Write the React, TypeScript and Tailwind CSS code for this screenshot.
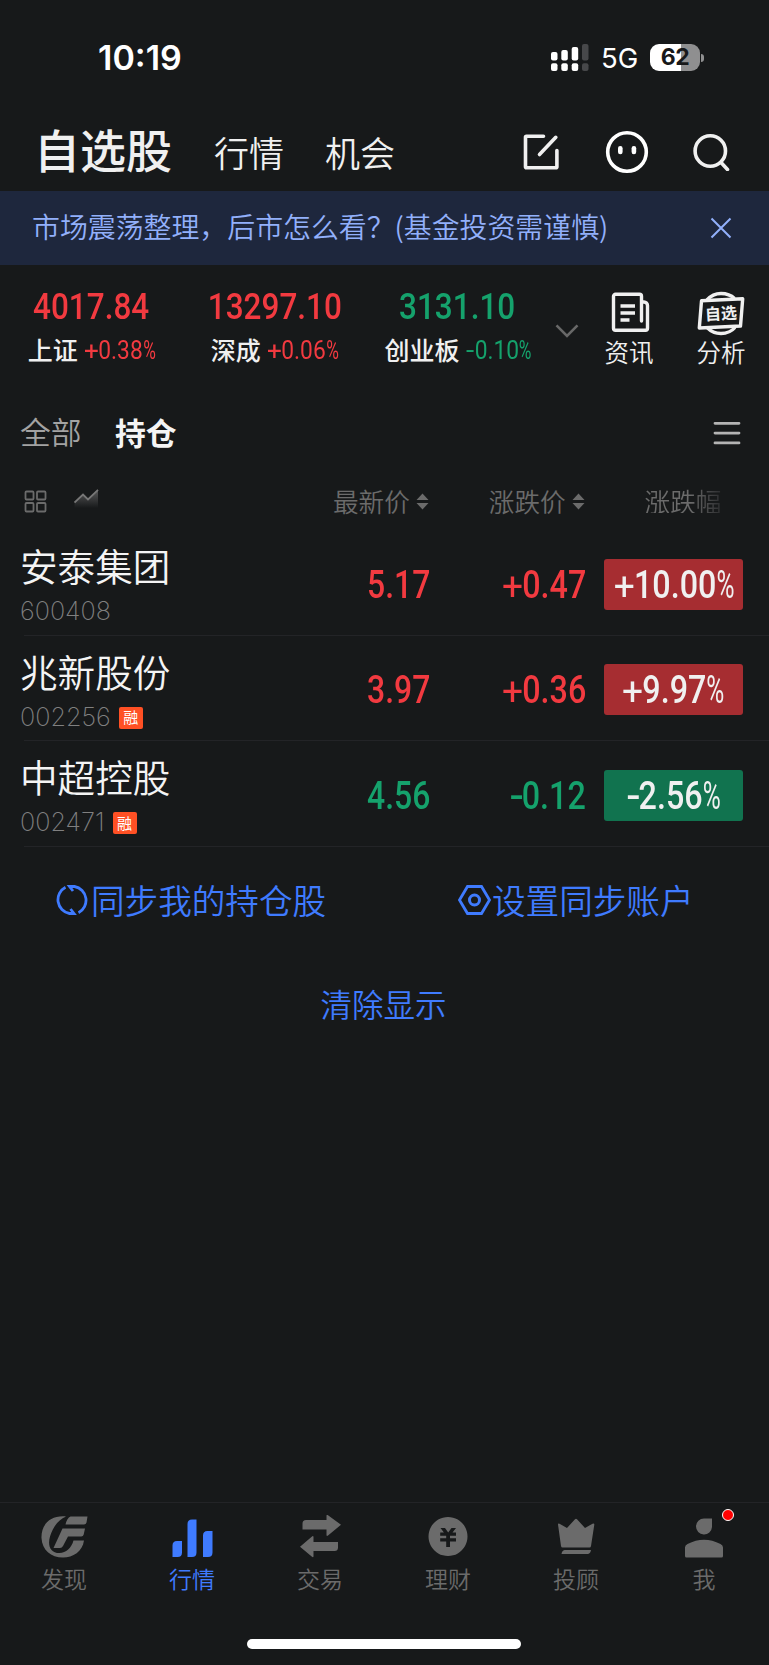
import React from "react";

type Tone = "up" | "down";

const toneText: Record<Tone, string> = {
  up: "text-[#f23a40]",
  down: "text-[#15a26c]",
};

const tonePill: Record<Tone, string> = {
  up: "bg-[#a62d31]",
  down: "bg-[#11734f]",
};

/** Condensed figures; the origin class decides which edge stays put. */
function Figure({ value, className }: { value: string; className: string }) {
  const percent = value.endsWith("%");
  const sign = /^[+-]/.test(value) ? value[0] : "";
  const digits = value.replace(/[+\-%]/g, "");
  return (
    <span className={`inline-block whitespace-nowrap font-['Roboto'] leading-none ${className}`}>
      {sign === "+" && <span className="inline-block w-[0.63em] origin-left translate-y-[0.05em] scale-x-[1.15] font-normal">+</span>}
      {sign === "-" && <span className="inline-block w-[0.38em] origin-left scale-x-[1.3]">-</span>}
      {digits}
      {percent && <span className="inline-block w-[0.55em] origin-left scale-x-[0.76] font-normal">%</span>}
    </span>
  );
}

function StatusBar() {
  return (
    <div className="flex h-[115px] items-center pl-[98px] text-white">
      <span className="w-[453px] pt-px font-['Inter'] text-[34px] font-semibold leading-none">10:19</span>
      <svg width="38" height="28" viewBox="0 0 38 28" fill="currentColor">
        <rect x="0" y="8" width="6.5" height="8.5" rx="2" />
        <rect x="10.3" y="6" width="6.5" height="10.5" rx="2" />
        <rect x="20.7" y="3" width="6.5" height="13.5" rx="2" />
        <rect x="31" y="0" width="6.5" height="16.5" rx="2" fill="#47484a" />
        <rect x="0" y="19.3" width="6.5" height="7.7" rx="2" />
        <rect x="10.3" y="19.3" width="6.5" height="7.7" rx="2" />
        <rect x="20.7" y="19.3" width="6.5" height="7.7" rx="2" />
        <rect x="31" y="19.3" width="6.5" height="7.7" rx="2" fill="#47484a" />
      </svg>
      <span className="ml-[12px] w-[49px] pt-[3px] font-['Inter'] text-[27.5px] leading-none">5G</span>
      <div className="flex h-[27px] w-[50px] items-center justify-center rounded-[9px] bg-[linear-gradient(90deg,#fff_63%,#8f8f90_63%)]">
        <span className="font-['Inter'] text-[23px] font-bold leading-none tracking-[-0.5px] text-[#17181a]">62</span>
      </div>
      <span className="ml-px h-[8px] w-[3px] rounded-r-full bg-[#8f8f90]" />
    </div>
  );
}

function Header() {
  return (
    <div className="flex h-[74px] items-center pl-[34px] text-[#f0f0f0]">
      <span className="mt-[-9px] w-[180px] text-[46px] font-medium leading-none">自选股</span>
      <span className="mt-[-1px] w-[111px] text-[35px] font-[350] leading-none">行情</span>
      <span className="mt-[-1px] w-[198px] text-[35px] font-[350] leading-none">机会</span>
      <svg width="38" height="38" viewBox="0 0 38 38" fill="none" stroke="currentColor" strokeWidth="3.6" strokeLinecap="round" strokeLinejoin="round">
        <path d="M20.5 3.3H3.5a1 1 0 0 0-1 1v29.4a1 1 0 0 0 1 1h29.4a1 1 0 0 0 1-1V17.5M32.8 4.3 16.5 21.5" />
      </svg>
      <svg className="ml-[44px]" width="44" height="44" viewBox="0 0 44 44" fill="none">
        <circle cx="22" cy="22" r="19.3" stroke="#fff" strokeWidth="3.6" />
        <rect x="13" y="16" width="4.6" height="8.2" rx="2.2" fill="#fff" />
        <rect x="26.6" y="16" width="4.6" height="8.2" rx="2.2" fill="#fff" />
      </svg>
      <svg className="ml-[44px]" width="38" height="38" viewBox="0 0 38 38" fill="none" stroke="currentColor" strokeWidth="3.6" strokeLinecap="round">
        <circle cx="17.3" cy="18" r="15.2" />
        <path d="m28.5 30 6 6.5" />
      </svg>
    </div>
  );
}

function Notice() {
  return (
    <div className="mt-[2px] flex h-[74px] items-center bg-[#1e273d] pl-[32px] text-[27.9px] font-[350] leading-none text-[#92b0fb]">
      <span className="-mt-[3px] w-[678px]">市场震荡整理，后市怎么看？(基金投资需谨慎)</span>
      <svg width="22" height="22" viewBox="0 0 22 22" fill="none" stroke="currentColor" strokeWidth="2">
        <path d="m1.5 1.5 19 19M20.5 1.5l-19 19" />
      </svg>
    </div>
  );
}

function IndexQuote({ value, name, change, tone, width }: { value: string; name: string; change: string; tone: Tone; width: string }) {
  return (
    <div className={`flex flex-col items-center ${width}`}>
      <Figure value={value} className={`scale-x-[0.84] text-[37.5px] font-medium ${toneText[tone]}`} />
      <div className="mt-[10px] flex items-center">
        <span className="text-[25px] font-medium leading-none text-[#f0f0f0]">{name}</span>
        <Figure value={change} className={`ml-[6px] mr-[-7px] mt-[2px] origin-left scale-x-[0.91] text-[25px] ${toneText[tone]}`} />
      </div>
    </div>
  );
}

function Indices() {
  return (
    <div className="flex h-[126px] pt-[23px]">
      <IndexQuote value="4017.84" name="上证" change="+0.38%" tone="up" width="w-[183px]" />
      <IndexQuote value="13297.10" name="深成" change="+0.06%" tone="up" width="w-[183px]" />
      <IndexQuote value="3131.10" name="创业板" change="-0.10%" tone="down" width="w-[183px]" />
      <svg className="ml-[6px] mt-[36px]" width="24" height="14" viewBox="0 0 24 14" fill="none" stroke="#686868" strokeWidth="2.6">
        <path d="m1.5 1.3 10.5 10.5L22.5 1.3" />
      </svg>
      <div className="ml-[25px] mt-[4px] flex w-[50px] flex-col items-center text-[#f0f0f0]">
        <svg className="ml-[3px]" width="40" height="42" viewBox="0 0 40 42" fill="none" stroke="currentColor" strokeWidth="3.6" strokeLinejoin="round">
          <path d="M30.5 29V4.300a2 2 0 0 0-2-2H4.500a2 2 0 0 0-2 2v31.900a2 2 0 0 0 2 2h30a2 2 0 0 0 2-2V13.500a3.500 3.500 0 0 0-3.500-3.500H30.500" strokeWidth="3.4" strokeLinecap="round" />
          <path d="M9.500 14h14.500M9.500 21h14.500M9.500 28h9" strokeWidth="3.3" />
        </svg>
        <span className="mt-[6px] text-[24.5px] font-[350] leading-none">资讯</span>
      </div>
      <div className="ml-[41px] mt-[3px] flex w-[52px] flex-col items-center text-[#f0f0f0]">
        <svg width="50" height="45" viewBox="0 0 50 45" fill="none" stroke="currentColor" strokeWidth="3.4" strokeLinejoin="round">
          <path d="M11 9C15 4.5 19.5 2.5 25 2.5S35 4 38.5 7.5M11 36.5c4 4 8.5 6 14 6s10.5-2 14-6" />
          <path d="M5.5 9.8 46.7 7.8 44.5 35 3.3 37z" />
          <text x="25" y="28.3" textAnchor="middle" fill="currentColor" stroke="none" fontSize="16" fontWeight="700" transform="rotate(-3 25 22)">自选</text>
        </svg>
        <span className="mt-[4px] text-[24.5px] font-[350] leading-none">分析</span>
      </div>
    </div>
  );
}

function GroupTabs() {
  return (
    <div className="flex h-[84px] items-center pl-[20px] text-[30.8px] leading-none">
      <span className="-mt-[3px] w-[95px] font-[350] text-[#a3a3a3]">全部</span>
      <span className="-mt-[2px] w-[598px] font-bold text-[#f4f4f4]">持仓</span>
      <svg width="28" height="24" viewBox="0 0 28 24" fill="none" stroke="#b4b4b4" strokeWidth="2.8" strokeLinecap="round">
        <path d="M2 2.3h24M2 12.1h24M2 21.9h24" />
      </svg>
    </div>
  );
}

function SortMark() {
  return (
    <svg className="-mt-px" width="13" height="17" viewBox="0 0 13 17" fill="#6b6b6b">
      <path d="M6.5.5 12.5 7H.5zM6.5 16.5 12.5 10H.5z" />
    </svg>
  );
}

function ColumnHeads() {
  return (
    <div className="flex h-[53px] items-center pl-[24px] text-[25.6px] font-[350] leading-none text-[#6b6b6b]">
      <svg width="23" height="23" viewBox="0 0 23 23" fill="none" stroke="#6b6b6b" strokeWidth="1.8">
        <rect x="1.5" y="1.5" width="8" height="8" rx="1" />
        <rect x="13" y="1.5" width="8.5" height="8" rx="1" />
        <rect x="1.5" y="13" width="8" height="8.5" rx="1" />
        <rect x="13" y="13" width="8.5" height="8.5" rx="1" />
      </svg>
      <svg className="-mt-[3px] ml-[27px] mr-[234px]" width="25" height="22" viewBox="0 0 25 22" fill="none">
        <defs>
          <linearGradient id="trend" x1="0" y1="0" x2="0" y2="1">
            <stop offset="0" stopColor="#777" stopOpacity="0.7" />
            <stop offset="1" stopColor="#777" stopOpacity="0" />
          </linearGradient>
        </defs>
        <path d="M.5 13.5 9 5.5 14 10.5 24 .5V19H.5z" fill="url(#trend)" />
        <path d="M.5 13.5 9 5.5 14 10.5 24 .8" stroke="#777" strokeWidth="1.8" />
      </svg>
      <span className="-mt-[2px] mr-[6px]">最新价</span>
      <SortMark />
      <span className="-mt-[2px] ml-[60px] mr-[6px]">涨跌价</span>
      <SortMark />
      <span className="-mt-[2px] ml-[60px] bg-[linear-gradient(90deg,#6b6b6b_60%,#2c2d2f_100%)] bg-clip-text text-transparent">涨跌幅</span>
    </div>
  );
}

type Stock = { name: string; code: string; margin: boolean; price: string; delta: string; percent: string; tone: Tone };

const stocks: Stock[] = [
  { name: "安泰集团", code: "600408", margin: false, price: "5.17", delta: "+0.47", percent: "+10.00%", tone: "up" },
  { name: "兆新股份", code: "002256", margin: true, price: "3.97", delta: "+0.36", percent: "+9.97%", tone: "up" },
  { name: "中超控股", code: "002471", margin: true, price: "4.56", delta: "-0.12", percent: "-2.56%", tone: "down" },
];

function StockRow({ stock }: { stock: Stock }) {
  return (
    <div className="ml-[24px] flex h-[105.5px] items-center border-b border-[#232427]">
      <div className="-ml-[4px] mt-[6px] flex w-[240px] flex-col">
        <span className="text-[37.6px] font-[350] leading-none text-[#f4f4f4]">{stock.name}</span>
        <div className="mt-[16px] flex h-[24px] items-center">
          <span className="font-['Inter'] text-[25.2px] font-extralight leading-none text-[#808080]">{stock.code}</span>
          {stock.margin && (
            <span className="ml-[8px] flex h-[22px] w-[24px] items-center justify-center rounded-[2px] bg-[#ff5024] pb-[2px] text-[15px] leading-none text-white">融</span>
          )}
        </div>
      </div>
      <div className="mt-[5px] flex w-[170px] justify-end">
        <Figure value={stock.price} className={`origin-right scale-x-[0.84] text-[38px] font-medium ${toneText[stock.tone]}`} />
      </div>
      <div className="mt-[5px] flex w-[156px] justify-end">
        <Figure value={stock.delta} className={`origin-right scale-x-[0.85] text-[38px] font-medium ${toneText[stock.tone]}`} />
      </div>
      <div className={`ml-[18px] mt-[4px] flex h-[51px] w-[139px] items-center justify-center rounded-[3px] pt-px text-[#f0f0f0] ${tonePill[stock.tone]}`}>
        <Figure value={stock.percent} className="-mx-[10px] scale-x-[0.85] text-[38px] font-medium" />
      </div>
    </div>
  );
}

function SyncActions() {
  return (
    <div className="flex h-[108px] items-center pl-[56px] text-[33.6px] font-[350] leading-none text-[#3f7bff]">
      <svg className="-mt-px" width="32" height="32" viewBox="0 0 32 32" fill="none" stroke="currentColor" strokeWidth="2.8">
        <path d="M9.5 3.3A14 14 0 0 0 13.5 29.5H18L14.5 25M22.5 28.7A14 14 0 0 0 18.5 2.5H13.5L17 7" />
      </svg>
      <span className="-mt-[2px] ml-[3px] w-[367px]">同步我的持仓股</span>
      <svg className="-mt-px" width="33" height="32" viewBox="0 0 33 32" fill="none" stroke="currentColor" strokeWidth="2.8">
        <path d="M9.5 2.5h14L31.5 16l-8 13.5h-14L1.5 16z" />
        <circle cx="16.5" cy="16" r="5" strokeWidth="3" />
      </svg>
      <span className="-mt-[2px] ml-px">设置同步账户</span>
    </div>
  );
}

const tabs: { label: string; active?: boolean; icon: React.ReactNode }[] = [
  {
    label: "发现",
    icon: (
      <path d="M26 1.500C9 0 1 11 1.500 23 2 35 11 42.500 23 42.500c10 0 19.500-6 21-17H33.500C31.500 33 26 38 19.500 38 10 38 7.500 30 10 21.500 13 12 18 5 26 1.500ZM30.500 1.500h17L46.500 7.500q-.5 2-2.500 2H25.500q1.500-6.500 5-8ZM22.500 13.500h22.500l-1.300 6q-.5 2-2.500 2H28L23 31q-1 2-3 2H13.500Z" />
    ),
  },
  {
    label: "行情",
    active: true,
    icon: (
      <path d="M4.5 42V30.5q0-4.5 4.5-4.5h5v11.5q0 4.5-4.5 4.5ZM19.5 42V9q0-4.5 4.500-4.500h4.500v33q0 4.500-4.500 4.500ZM35 42V20.500q0-4.500 4.500-4.500h5v21.500q0 4.500-4.500 4.500Z" />
    ),
  },
  {
    label: "交易",
    icon: (
      <path d="M6.5 14V8.5q0-3.5 3.5-3.5h20.5V1q0-2 1.5-.8L45 9.8 32 20.5q-1.5 1.2-1.5-.8V14.5H6.5ZM42 27v5.5q0 3.5-3.5 3.5H17.5v5q0 2-1.5.8L4 31.800 16 21.500q1.500-1.200 1.500.8V27Z" />
    ),
  },
  {
    label: "理财",
    icon: (
      <path fillRule="evenodd" d="M24 2a19.5 19.5 0 1 0 .01 0ZM16.5 13h4.500l3.200 4.500L27.500 13H32l-3.500 4.500H32v3.300h-6v2.500h6v3.300h-6V32h-3.800v-5.400h-6v-3.300h6v-2.500h-6v-3.300h3.700Z" />
    ),
  },
  {
    label: "投顾",
    icon: (
      <path d="M6 9.5q0-1.5 1.5-.8L15 13 23 4.200q1-1 2 0L33 13l7.500-4.300q2-.7 1.800 1L39 31q-.2 1.500-1.500 1.500h-27Q9.300 32.500 9 31ZM9.500 39q.5-3.500 3-4h26.500q-.5 3.500-3 4Z" />
    ),
  },
  {
    label: "我",
    icon: (
      <path d="M24 3.5h8v8.5a8 8 0 1 1-8-8.500ZM5 41V32.500Q5 30 7.500 29q16.500-8.500 33 0Q43 30 43 32.500V41q0 1.500-1.500 1.500h-35Q5 42.500 5 41Z" />
    ),
  },
];

function TabBar() {
  return (
    <nav className="flex h-[163px] flex-col border-t border-[#232427] bg-[#17191a]">
      <div className="grid h-[136px] w-[768px] grid-cols-6">
        {tabs.map((tab) => (
          <div key={tab.label} className={`flex flex-col items-center pt-[12px] ${tab.active ? "text-[#3f7bff]" : "text-[#6b6b6b]"}`}>
            <div className="relative">
              <svg width="48" height="44" viewBox="0 0 48 44" fill="currentColor">
                {tab.icon}
              </svg>
              {tab.label === "我" && <span className="absolute -right-[6px] -top-[6px] size-[12px] rounded-full border border-white bg-[#ff0000]" />}
            </div>
            <span className="mt-[8px] text-[23px] font-[350] leading-none">{tab.label}</span>
          </div>
        ))}
      </div>
      <div className="ml-[247px] h-[10px] w-[274px] rounded-full bg-white" />
    </nav>
  );
}

export default function App() {
  return (
    <main className="flex h-[1665px] w-[769px] flex-col overflow-hidden bg-[#17191a] font-['Noto_Sans_CJK_SC',sans-serif]">
      <StatusBar />
      <Header />
      <Notice />
      <Indices />
      <GroupTabs />
      <ColumnHeads />
      <div className="pt-[2px]">
        {stocks.map((stock) => (
          <StockRow key={stock.code} stock={stock} />
        ))}
      </div>
      <SyncActions />
      <div className="flex h-[99px] w-[767px] items-center justify-center text-[31.5px] font-[350] leading-none text-[#3f7bff]">清除显示</div>
      <div className="flex-1" />
      <TabBar />
    </main>
  );
}
